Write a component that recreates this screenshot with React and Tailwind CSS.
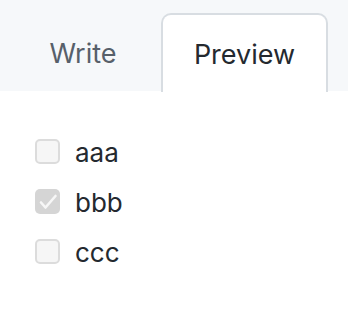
const items = [
  { label: 'aaa', checked: false },
  { label: 'bbb', checked: true },
  { label: 'ccc', checked: false },
]

function Box({ checked }) {
  if (checked) {
    return (
      <span className="flex h-[25px] w-[25px] items-center justify-center rounded-[5px] bg-[#d5d5d5]">
        <svg viewBox="0 0 24 24" className="h-[24px] w-[24px]" fill="none" stroke="#f7f7f7" strokeWidth="2.6" strokeLinecap="round" strokeLinejoin="round">
          <path d="M5 12.5l4.5 5L19.5 6" />
        </svg>
      </span>
    )
  }
  return <span className="h-[25px] w-[25px] rounded-[5px] border-2 border-[#dcdcdc] bg-[#f6f6f6]" />
}

export default function App() {
  return (
    <div className="h-[314px] w-[348px] bg-white font-['Inter','Liberation_Sans',sans-serif]">
      {/* tabs */}
      <div className="flex h-[91px] items-end bg-[#f6f8fa] pl-[16px]">
        <div className="flex h-[78px] w-[134px] items-center justify-center pt-[4px] text-[27px] text-[#57606a]">
          Write
        </div>
        <div className="-mb-px ml-[11px] flex h-[79px] w-[167px] items-center justify-center rounded-t-[10px] border-2 border-b-0 border-[#d8dde2] bg-white pt-[4px] text-[27px] text-[#24292f]">
          Preview
        </div>
      </div>

      {/* preview */}
      <ul className="flex flex-col gap-[25px] pl-[35px] pt-[48px]">
        {items.map((it) => (
          <li key={it.label} className="flex h-[25px] items-center gap-[15px] text-[26px] text-[#24292f]">
            <Box checked={it.checked} />
            <span className="pt-[2px]">{it.label}</span>
          </li>
        ))}
      </ul>
    </div>
  )
}
